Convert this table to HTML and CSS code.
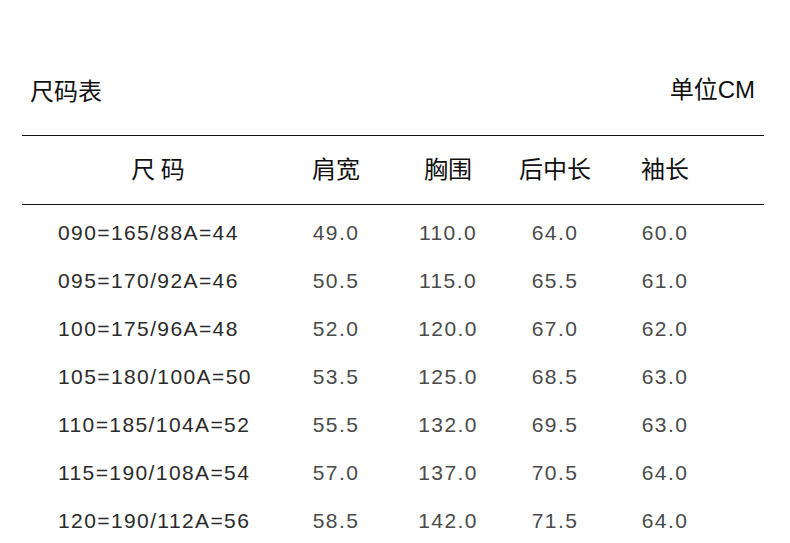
FILE: index.html
```html
<!DOCTYPE html>
<html lang="zh">
<head>
<meta charset="utf-8">
<title>尺码表</title>
<link rel="stylesheet" href="styles.css">
</head>
<body>
<div class="sheet">
  <div class="top">
    <span class="title">尺码表</span>
    <span class="unit">单位CM</span>
  </div>
  <div class="table">
    <div class="row head">
      <div class="c1">尺 码</div>
      <div class="c">肩宽</div>
      <div class="c">胸围</div>
      <div class="c">后中长</div>
      <div class="c">袖长</div>
    </div>
    <div class="body">
      <div class="row data"><div class="c1">090=165/88A=44</div><div class="c">49.0</div><div class="c">110.0</div><div class="c">64.0</div><div class="c">60.0</div></div>
      <div class="row data"><div class="c1">095=170/92A=46</div><div class="c">50.5</div><div class="c">115.0</div><div class="c">65.5</div><div class="c">61.0</div></div>
      <div class="row data"><div class="c1">100=175/96A=48</div><div class="c">52.0</div><div class="c">120.0</div><div class="c">67.0</div><div class="c">62.0</div></div>
      <div class="row data"><div class="c1">105=180/100A=50</div><div class="c">53.5</div><div class="c">125.0</div><div class="c">68.5</div><div class="c">63.0</div></div>
      <div class="row data"><div class="c1">110=185/104A=52</div><div class="c">55.5</div><div class="c">132.0</div><div class="c">69.5</div><div class="c">63.0</div></div>
      <div class="row data"><div class="c1">115=190/108A=54</div><div class="c">57.0</div><div class="c">137.0</div><div class="c">70.5</div><div class="c">64.0</div></div>
      <div class="row data"><div class="c1">120=190/112A=56</div><div class="c">58.5</div><div class="c">142.0</div><div class="c">71.5</div><div class="c">64.0</div></div>
    </div>
  </div>
</div>
</body>
</html>
```

FILE: styles.css
```css
html, body {
  margin: 0;
  padding: 0;
  background: #fff;
}
body {
  font-family: "Liberation Sans", "Noto Sans CJK SC", sans-serif;
  color: #111;
}
.sheet {
  width: 742px;
  margin-left: 22px;
}
.top {
  display: flex;
  justify-content: space-between;
  align-items: center;
  padding: 75px 9px 30px 8px;
  border-bottom: 1px solid #111;
  font-size: 24px;
  line-height: 30px;
}
.title {
  font-family: "Noto Sans CJK SC", sans-serif;
}
.row {
  display: grid;
  grid-template-columns: 259px 110px 114px 100px 120px;
  align-items: center;
}
.head {
  height: 63px;
  padding-bottom: 5px;
  border-bottom: 1px solid #111;
  font-family: "Noto Sans CJK SC", sans-serif;
  font-size: 24px;
  color: #111;
}
.head .c1 {
  text-align: center;
  padding-left: 13px;
}
.head .c {
  text-align: center;
}
.body {
  padding-top: 4px;
}
.data {
  height: 48px;
  font-size: 21px;
  letter-spacing: 1.4px;
}
.data .c1 {
  padding-left: 36px;
  color: #2a2a2a;
}
.data .c {
  text-align: center;
  color: #4a4a4a;
}
```
